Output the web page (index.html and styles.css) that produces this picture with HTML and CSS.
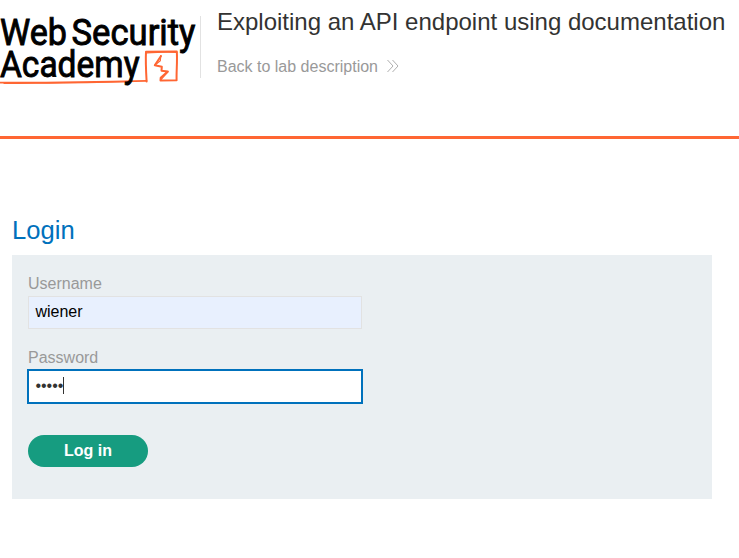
FILE: index.html
```html
<!DOCTYPE html>
<html lang="en">
<head>
<meta charset="utf-8">
<title>Exploiting an API endpoint using documentation</title>
<link rel="stylesheet" href="styles.css">
</head>
<body>
<header class="lab-header">
  <svg class="logo" width="200" height="90" viewBox="0 0 200 90" role="img" aria-label="Web Security Academy">
    <g class="logo-mark">
      <path stroke-width="1.8" d="M0 82.6 C35 82.7 90 82.3 146.5 80.8"/>
      <path stroke-width="1.2" d="M4 83.5 C40 83 80 83 125 81.6"/>
      <path stroke-width="2" d="M146.6 81.5 C146 71 145.5 61 146 51.8 L176.8 51.5 C177.5 61 176.3 71 176.6 80.3 L160.5 80.4 L160.7 77.8 L167.8 71.5 L161.5 70.7 L161.8 66.8 L154.8 65.3 L161 56"/>
      <path stroke-width="1.2" d="M146 52.8 C156 53 166 51 177 52.5 M155 65 L160.3 60.8 L160.8 55.5 M161 79.5 L168 71.8"/>
    </g>
    <g class="logo-text">
      <text x="0" y="44.5" textLength="67" lengthAdjust="spacingAndGlyphs">Web</text>
      <text x="71.5" y="44.5" textLength="124" lengthAdjust="spacingAndGlyphs">Security</text>
      <text x="0" y="76.8" textLength="139.5" lengthAdjust="spacingAndGlyphs">Academy</text>
    </g>
  </svg>
  <div class="title-box">
    <h2>Exploiting an API endpoint using documentation</h2>
    <a class="back-link">Back to lab description
      <svg width="12" height="14" viewBox="0 0 12 14"><path d="M.5 0 L6 6 L.5 12 M5.5 0 L11 6 L5.5 12"/></svg>
    </a>
  </div>
</header>
<main>
  <h1>Login</h1>
  <form class="login-form">
    <label for="username">Username</label>
    <input id="username" class="autofilled" type="text" value="wiener">
    <label for="password">Password</label>
    <div class="field focused" id="password"><span>•••••</span><i class="caret"></i></div>
    <button type="button">Log in</button>
  </form>
</main>
</body>
</html>
```
FILE: styles.css
```css
* { box-sizing: border-box; }
body {
  margin: 0;
  background: #fff;
  color: #333332;
  font: 16px/18px "Liberation Sans", Arial, sans-serif;
}
.lab-header {
  display: flex;
  height: 139px;
  border-bottom: 3px solid #ff6633;
}
.logo { flex: none; display: block; overflow: visible; }
.logo-text {
  font: 400 37px Roboto, sans-serif;
  fill: #000;
  stroke: #000;
  stroke-width: .9;
}
.logo-mark { fill: none; stroke: #ff6633; stroke-linejoin: round; stroke-linecap: round; }
.title-box {
  position: relative;
  padding: 8px 0 0 17px;
  white-space: nowrap;
}
.title-box::before {
  content: "";
  position: absolute;
  left: 0;
  top: 16px;
  width: 1px;
  height: 62px;
  background: #e2e2e2;
}
h2 { margin: 0 0 22px; font-size: 24px; line-height: 28px; font-weight: 400; }
.back-link { display: flex; align-items: center; gap: 8.7px; color: #999; }
.back-link svg { fill: none; stroke: #999; stroke-width: .8; }
main { padding: 76px 27px 0 12px; }
h1 { margin: 0 0 10px; font-size: 25.6px; line-height: 30px; font-weight: 400; color: #0071bc; }
.login-form {
  display: flex;
  flex-direction: column;
  align-items: flex-start;
  height: 244px;
  padding: 20px 16px;
  background: #eaeff2;
}
label { margin-bottom: 3px; color: #999; }
input, .field {
  width: 334px;
  height: 33px;
  margin: 0 0 20px;
  padding: 0 6.4px 2px;
  border: 1px solid #e2e2e2;
  font: inherit;
}
.autofilled { background: #e8f0fe; color: #000; }
.field { display: flex; align-items: center; background: #fff; }
.focused { border-color: #0071bc; outline: 1px solid #0071bc; }
.caret { width: 1px; height: 17px; background: #333332; }
button {
  width: 120px;
  height: 32px;
  margin-top: 12px;
  padding: 0;
  border: 0;
  border-radius: 16px;
  background: #169c80;
  color: #fff;
  font: bold 16px/32px "Liberation Sans", Arial, sans-serif;
}
```
